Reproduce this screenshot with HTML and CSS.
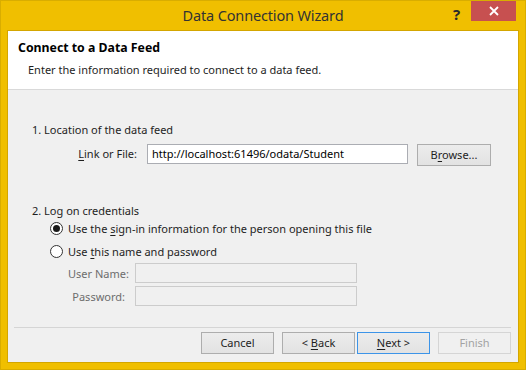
FILE: index.html
```html
<!DOCTYPE html>
<html>
<head>
<meta charset="utf-8">
<link rel="stylesheet" href="styles.css">
</head>
<body>
<div class="window">
  <div class="titlebar">
    <div class="title">Data Connection Wizard</div>
    <div class="help">?</div>
    <div class="close"><svg width="10" height="10" viewBox="0 0 10 10"><path d="M1 1L9 9M9 1L1 9" stroke="#fff" stroke-width="1.8"/></svg></div>
  </div>
  <div class="client">
    <div class="header">
      <div class="h-title">Connect to a Data Feed</div>
      <div class="h-sub">Enter the information required to connect to a data feed.</div>
    </div>
    <div class="body">
      <div class="section-title s1">1. Location of the data feed</div>
      <div class="link-row">
        <label class="link-label"><u>L</u>ink or File:</label>
        <div class="input link-input">http://localhost:61496/odata/Student</div>
        <div class="btn browse">B<u>r</u>owse...</div>
      </div>
      <div class="section-title s2">2. Log on credentials</div>
      <div class="radio-row r1"><span class="radio checked"></span><span>Use the <u>s</u>ign-in information for the person opening this file</span></div>
      <div class="radio-row"><span class="radio"></span><span>Use <u>t</u>his name and password</span></div>
      <div class="cred-row c1"><span class="cred-label">User Name:</span><div class="input disabled"></div></div>
      <div class="cred-row"><span class="cred-label">Password:</span><div class="input disabled"></div></div>
      <div class="spacer"></div>
      <div class="separator"></div>
      <div class="buttons">
        <div class="btn">Cancel</div>
        <div class="btn back">&lt; <u>B</u>ack</div>
        <div class="btn next"><u>N</u>ext &gt;</div>
        <div class="btn finish">Finish</div>
      </div>
    </div>
  </div>
</div>
</body>
</html>
```
FILE: styles.css
```css
* { box-sizing: border-box; }
html, body { margin: 0; padding: 0; }
body {
  width: 526px;
  height: 370px;
  overflow: hidden;
  font-family: "Noto Sans", "Open Sans", sans-serif;
  font-size: 11px;
  color: #1e1e1e;
}
.window {
  width: 526px;
  height: 370px;
  background: #f0bf00;
  border: 1px solid #d9ad00;
  display: flex;
  flex-direction: column;
}
.titlebar {
  height: 29px;
  position: relative;
  display: flex;
  justify-content: center;
}
.title {
  font-size: 14.5px;
  color: #333;
  line-height: 28px;
  letter-spacing: -0.15px;
}
.help {
  position: absolute;
  left: 452px;
  top: 3px;
  font-weight: bold;
  font-size: 15px;
  color: #2a2a2a;
}
.close {
  position: absolute;
  left: 470px;
  top: 0;
  width: 45px;
  height: 20px;
  background: #c75050;
  display: flex;
  align-items: center;
  justify-content: center;
}
.client {
  margin: 0 6px 6px 6px;
  flex: 1;
  border: 1px solid #d4a600;
  background: #f0f0f0;
  display: flex;
  flex-direction: column;
}
.header {
  height: 59px;
  background: #fff;
  border-bottom: 1px solid #d9d9d9;
  padding: 8px 0 0 10px;
}
.h-title {
  font-weight: bold;
  font-size: 12.3px;
  color: #000;
  line-height: 18px;
}
.h-sub {
  margin-top: 5px;
  padding-left: 10px;
  line-height: 16px;
  color: #1e1e1e;
}
.body {
  flex: 1;
  display: flex;
  flex-direction: column;
  padding: 0 7px 8px 6px;
}
.section-title {
  line-height: 16px;
  padding-left: 18px;
}
.s1 { margin-top: 32px; }
.s2 { margin-top: 37px; }
.link-row {
  display: flex;
  align-items: flex-start;
  margin-top: 6px;
  padding-left: 18px;
}
.link-label {
  width: 105px;
  text-align: right;
  line-height: 20px;
}
.input {
  height: 20px;
  border: 1px solid #abadb3;
  background: #fff;
  line-height: 18px;
  padding-left: 4px;
  color: #000;
}
.link-input {
  width: 261px;
  margin-left: 10px;
}
.btn {
  width: 73px;
  height: 22px;
  border: 1px solid #adadad;
  background: linear-gradient(#ececec, #e2e2e2);
  text-align: center;
  line-height: 20px;
  color: #1e1e1e;
}
.browse { margin-left: 9px; width: 74px; }
.radio-row {
  display: flex;
  align-items: center;
  height: 23px;
  padding-left: 36px;
}
.r1 { margin-top: -2px; }
.radio {
  width: 13px;
  height: 13px;
  border-radius: 50%;
  border: 1px solid #333;
  background: #fff;
  margin-right: 5px;
  display: flex;
  align-items: center;
  justify-content: center;
}
.radio.checked::after {
  content: "";
  width: 7px;
  height: 7px;
  border-radius: 50%;
  background: #1a1a1a;
}
.cred-row {
  display: flex;
  align-items: center;
  padding-left: 54px;
  height: 20px;
  margin-top: 3px;
}
.c1 { margin-top: 0; }
.cred-label {
  width: 57px;
  text-align: right;
  white-space: nowrap;
  color: #6d6d6d;
  margin-right: 10px;
}
.input.disabled {
  width: 222px;
  background: #f0f0f0;
  border-color: #cccccc;
}
.spacer { flex: 1; }
.separator {
  height: 1px;
  background: #d5d5d5;
  margin: 0 0 4px 0;
}
.buttons {
  display: flex;
  justify-content: flex-end;
  gap: 8px;
}
.back { margin-right: -6px; }
.next { border-color: #3c94e8; }
.finish {
  border-color: #d5d5d5;
  background: #f0f0f0;
  color: #a3a3a3;
}
u { text-decoration: underline; text-underline-offset: 2px; }
```
